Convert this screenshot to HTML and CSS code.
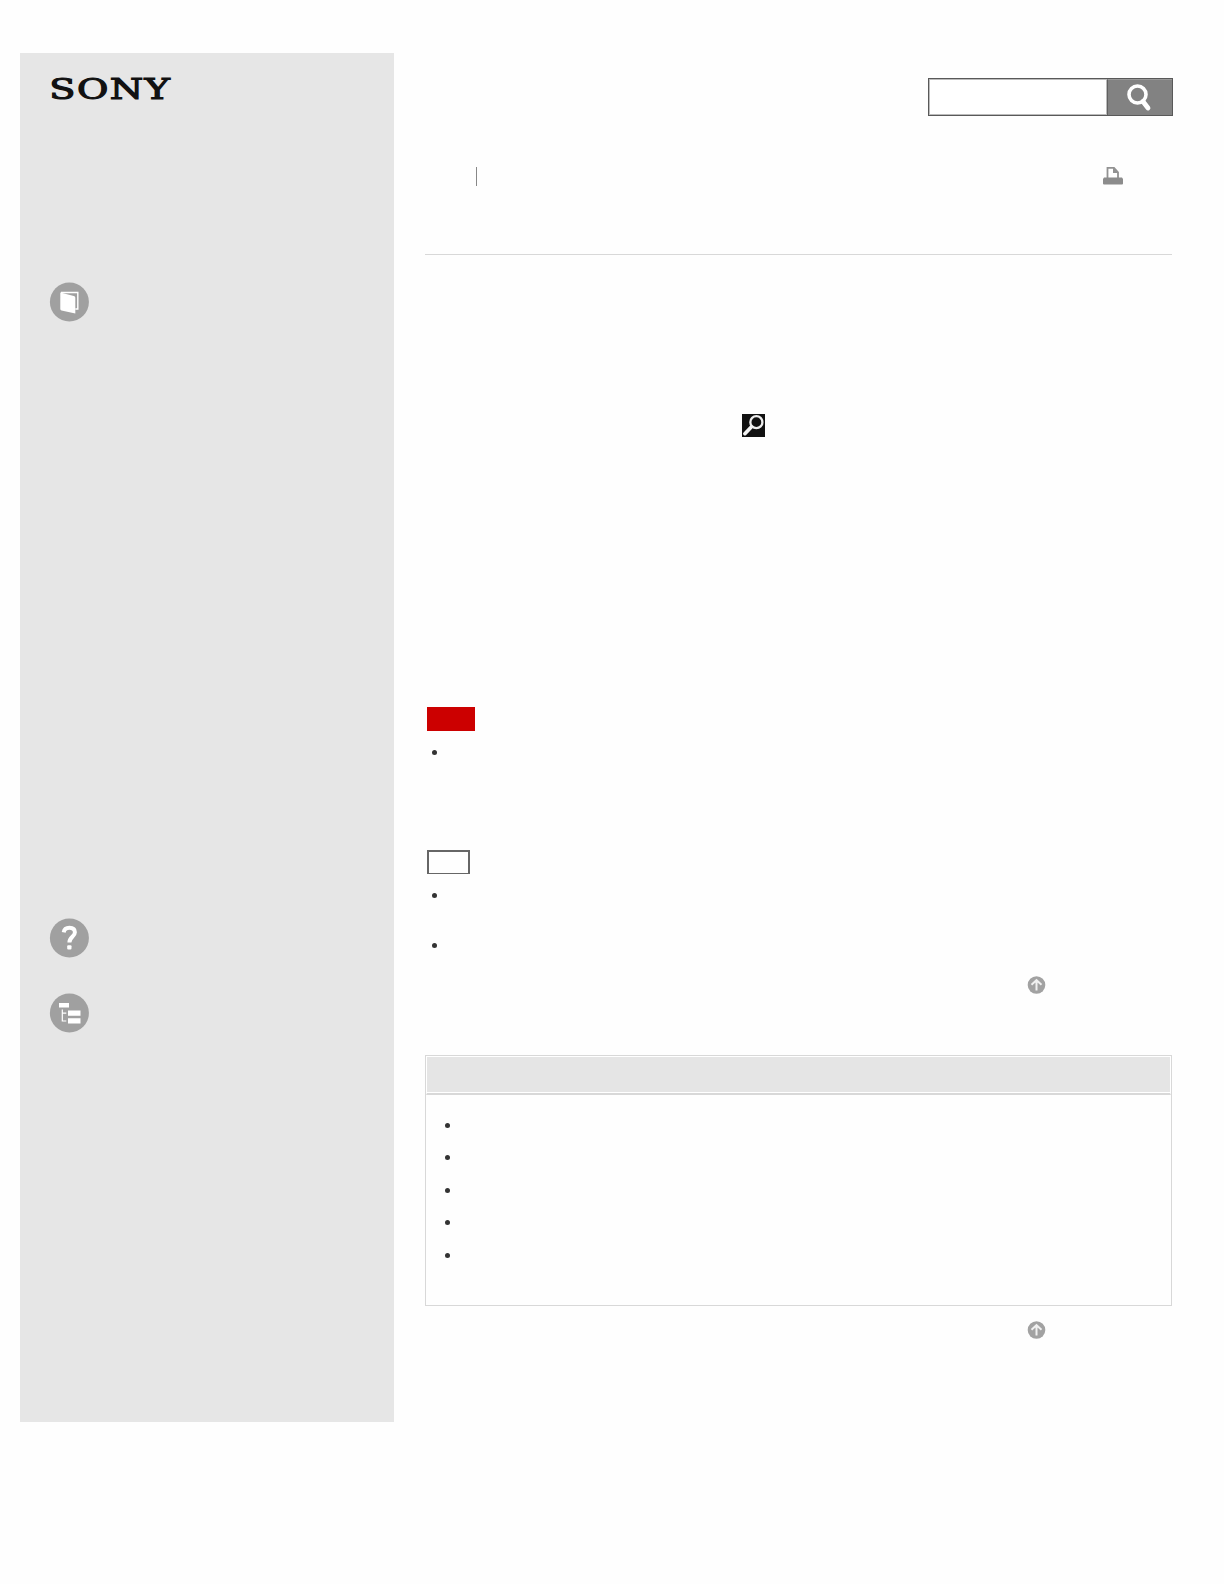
FILE: index.html
```html
<!DOCTYPE html>
<html lang="en">
<head>
    <meta charset="UTF-8">
    <title>SONY</title>
    <link rel="stylesheet" href="styles.css">
</head>
<body>
    <div class="page">
        <div class="side">
            <svg class="logo" width="140" height="44" viewBox="0 0 140 44">
                <text x="0.3" y="32" textLength="122" lengthAdjust="spacingAndGlyphs">SONY</text>
            </svg>
            <ul>
                <li class="book">
                    <svg width="40" height="40" viewBox="0 0 40 40">
                        <circle cx="20.4" cy="20" r="19.5" fill="#a0a0a0"/>
                        <path d="M12 10.5h16.8v16.5h-2.5" fill="none" stroke="#fff" stroke-width="1.4"/>
                        <path d="M11.3 10.5l13.5 3.5c1 .3 1.5.8 1.5 2V31.5L12.5 28.5q-1.2-.3-1.2-1.5z" fill="#fff"/>
                    </svg>
                </li>
                <li class="help">
                    <svg width="40" height="40" viewBox="0 0 40 40">
                        <circle cx="20.4" cy="20" r="19.5" fill="#a0a0a0"/>
                        <path d="M14.7 14.3c.5-3 2.5-4.500 5.700-4.500 3.600 0 5.500 1.700 5.500 4.500 0 4.500-5.500 4.700-5.500 10.200" fill="none" stroke="#fff" stroke-width="4"/>
                        <rect x="18.2" y="27.3" width="4.300" height="4.300" rx="1" fill="#fff"/>
                    </svg>
                </li>
                <li class="tree">
                    <svg width="40" height="40" viewBox="0 0 40 40">
                        <circle cx="20.4" cy="20" r="19.5" fill="#a0a0a0"/>
                        <path d="M10 10h10v4.500H10zM19 17.500h12.500v5.200H19zM19 25.300h12.500v5.200H19z" fill="#fff"/>
                        <path d="M13.300 16.500v11.500h4M13.300 20.200h4" fill="none" stroke="#fff" stroke-width="1.2"/>
                    </svg>
                </li>
            </ul>
        </div>

        <div class="main">
            <form class="search">
                <input type="text">
                <button type="button">
                    <svg width="28" height="30" viewBox="0 0 28 30">
                        <circle cx="11.5" cy="11.5" r="8.5" fill="none" stroke="#fff" stroke-width="3.6"/>
                        <path d="M17 18.500l5 6.500" stroke="#fff" stroke-width="4.8" stroke-linecap="round"/>
                    </svg>
                </button>
            </form>

            <div class="tools">
                <span class="bar"></span>
                <svg width="22" height="20" viewBox="0 0 22 20">
                    <path d="M5.500 12V1.800h6.500l4 4.500V12" fill="#fff" stroke="#929292" stroke-width="1.8"/>
                    <path d="M11 1.500v5.500h5.500z" fill="#929292"/>
                    <path d="M2 11.500h18l1 1.500v4.500q0 1-1 1H2q-1 0-1-1V13z" fill="#8c8c8c"/>
                </svg>
            </div>

            <div class="topic">
                <svg class="lens" width="23" height="23" viewBox="0 0 24 24">
                    <rect width="24" height="24" fill="#111"/>
                    <circle cx="15" cy="8.500" r="6.300" fill="none" stroke="#eee" stroke-width="2.4"/>
                    <path d="M9.700 13.500L3 20.500" stroke="#f5f5f5" stroke-width="3.8" stroke-linecap="round"/>
                </svg>
            </div>

            <div class="note"></div>
            <ul class="list">
                <li></li>
            </ul>

            <div class="hint"></div>
            <ul class="list">
                <li></li>
                <li></li>
            </ul>

            <div class="top">
                <svg width="20" height="20" viewBox="0 0 20 20">
                    <circle cx="10.5" cy="10" r="8.8" fill="#a2a2a2"/>
                    <path d="M10.500 15.500V6M5.500 9.700l5-4.500 5 4.500" fill="none" stroke="#f0f0f0" stroke-width="2"/>
                </svg>
            </div>

            <div class="related">
                <h4></h4>
                <ul>
                    <li></li>
                    <li></li>
                    <li></li>
                    <li></li>
                    <li></li>
                </ul>
            </div>

            <div class="top">
                <svg width="20" height="20" viewBox="0 0 20 20">
                    <circle cx="10.5" cy="10" r="8.8" fill="#a2a2a2"/>
                    <path d="M10.500 15.500V6M5.500 9.700l5-4.500 5 4.500" fill="none" stroke="#f0f0f0" stroke-width="2"/>
                </svg>
            </div>
        </div>
    </div>
</body>
</html>
```
FILE: styles.css
```css
*{
    margin: 0;
    padding: 0;
    box-sizing: border-box;
}
body{
    background: #fefefe;
    font-family: "Liberation Sans", Arial, sans-serif;
}
ul{
    list-style: none;
}
svg{
    display: block;
}
.page{
    display: flex;
    width: 1152px;
    height: 1369px;
    margin: 53px 0 0 20px;
}

/* left column */
.side{
    width: 374px;
    padding: 14px 0 0 29px;
    background: #e6e6e6;
}
.logo text{
    font-family: "DejaVu Serif", serif;
    font-size: 27px;
    letter-spacing: 1px;
    fill: #111;
    stroke: #111;
    stroke-width: 1.1px;
}
.side .book{
    margin-top: 171px;
}
.side .help{
    margin-top: 596px;
}
.side .tree{
    margin-top: 35px;
}

/* right column */
.main{
    width: 747px;
    margin-left: 31px;
    padding-top: 25px;
}
.search{
    display: flex;
    width: 245px;
    height: 38px;
    margin: 0 -1px 0 auto;
    border: 1px solid #595959;
}
.search input{
    width: 178px;
    border: 1px solid #bbb;
    background: #fff;
}
.search button{
    display: flex;
    flex: 1;
    padding: 3px 0 0 18px;
    border: 0;
    border-left: 1px solid #606060;
    border-top: 1px solid #999;
    background: #828282;
}
.tools{
    display: flex;
    justify-content: space-between;
    height: 89px;
    margin-top: 50px;
    padding: 0 48px 0 51px;
    border-bottom: 1px solid #d8d8d8;
}
.bar{
    width: 1px;
    height: 19px;
    margin-top: 1px;
    background: #888;
}
.topic{
    height: 452px;
    padding: 159px 0 0 317px;
}
.note{
    width: 48px;
    height: 24px;
    margin-left: 2px;
    background: #c00;
}
.hint{
    width: 43px;
    height: 24px;
    margin: 95px 0 0 2px;
    border: 2px solid #666;
    border-bottom-width: 1px;
}
.list{
    padding: 19px 0 0 7px;
}
.list li,
.related li{
    width: 5px;
    height: 5px;
    border-radius: 50%;
    background: #333;
}
.list li + li{
    margin-top: 45px;
}
.top{
    padding: 27px 0 0 601px;
}
.related{
    height: 251px;
    margin-top: 60px;
    border: 1px solid #d8d8d8;
}
.related h4{
    height: 39px;
    border: 1px solid #fff;
    border-bottom: 2px solid #d8d8d8;
    background: #e5e5e5;
    box-shadow: inset 0 -1px #fff;
}
.related ul{
    display: grid;
    row-gap: 27.4px;
    padding: 28px 0 0 19px;
}
.related + .top{
    padding-top: 14px;
}
```
